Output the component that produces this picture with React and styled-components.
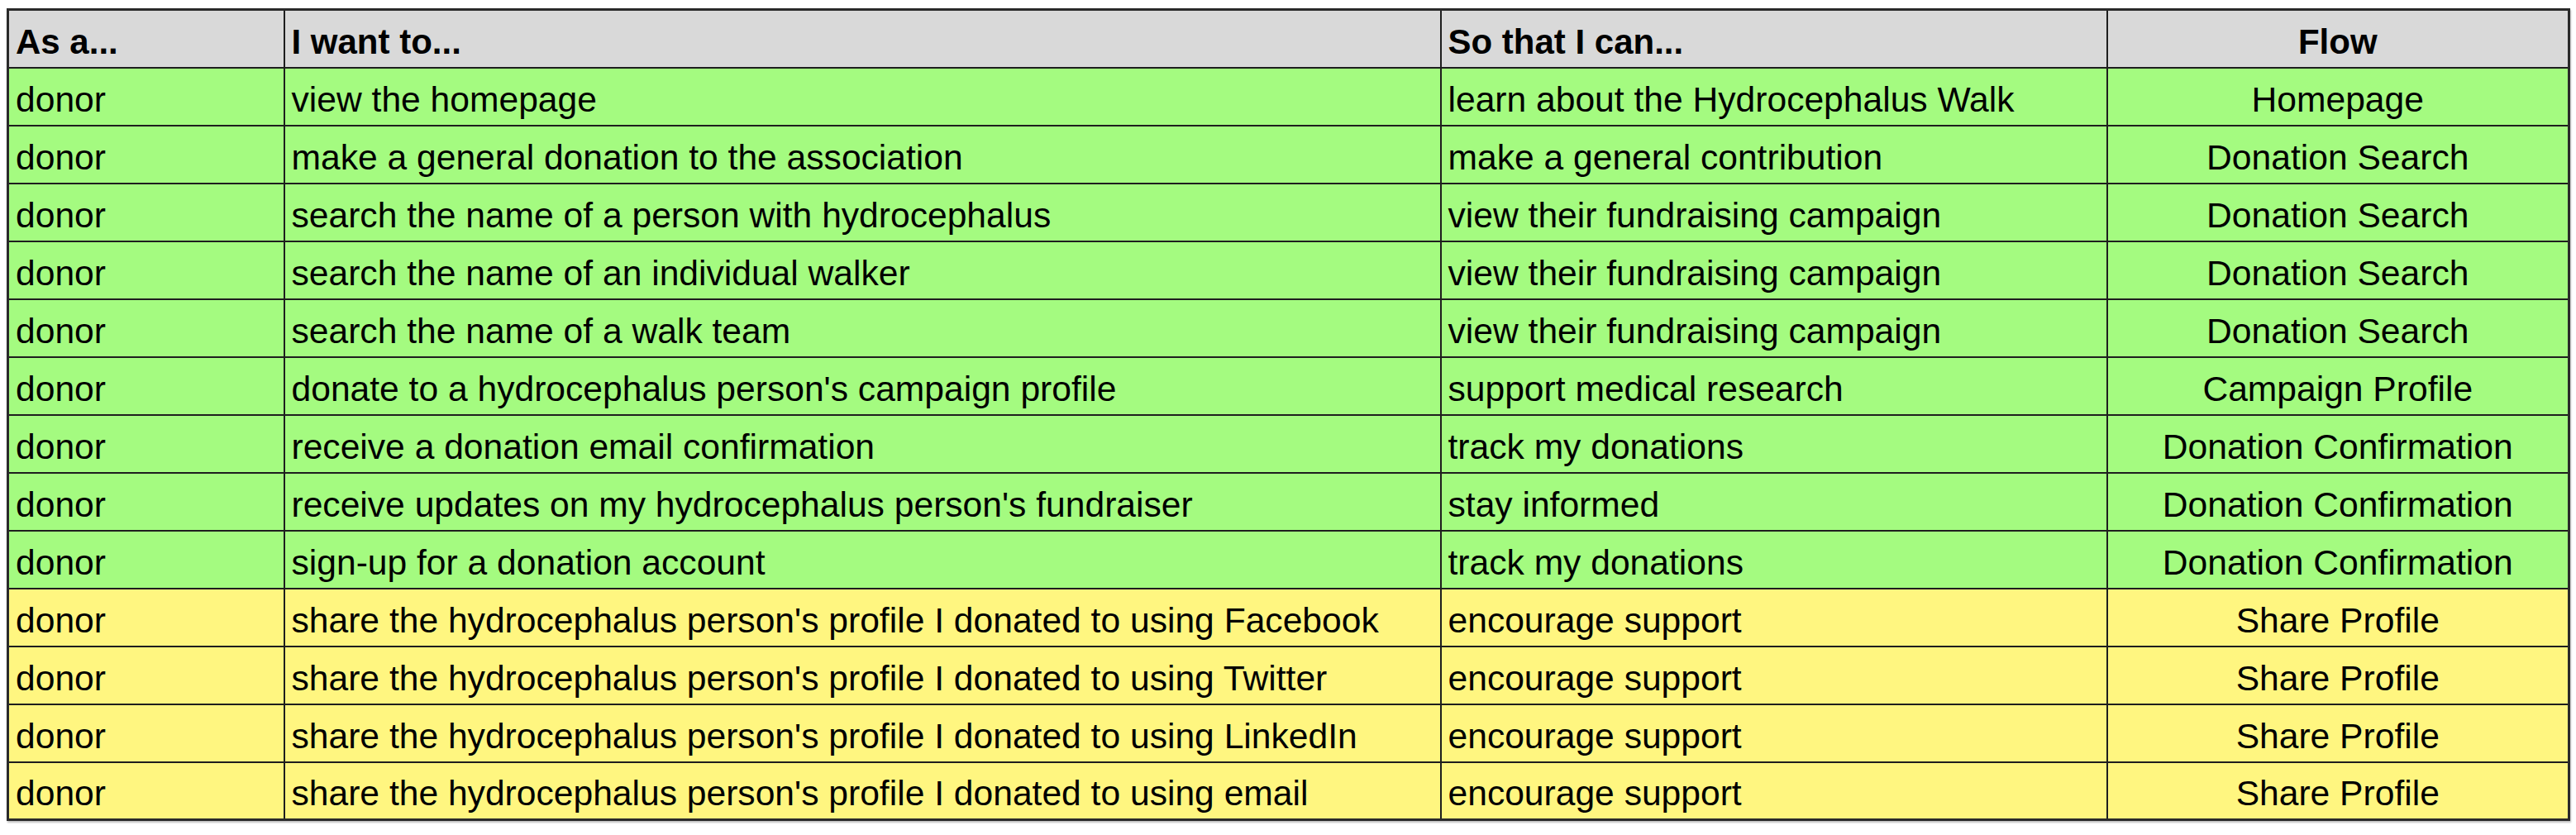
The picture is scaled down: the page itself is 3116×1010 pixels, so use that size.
import styled, { createGlobalStyle } from 'styled-components';

const GlobalStyle = createGlobalStyle`
  html, body {
    margin: 0;
    background: #ffffff;
  }
  body {
    padding: 10px 8px;
    font-family: "Liberation Sans", Arial, Helvetica, sans-serif;
    color: #000;
  }
`;

const Sheet = styled.table`
  width: 3098px;
  border-collapse: collapse;
  table-layout: fixed;
  border: 3px solid #2a2a2a;
  box-shadow: 1px 2px 2px rgba(0, 0, 0, 0.25);
`;

const Row = styled.tr`
  height: 70px;
  background: ${({ $tone }) =>
    $tone === 'head' ? '#d9d9d9' : $tone === 'yellow' ? '#fff680' : '#a4fb80'};
`;

const HeadCell = styled.th`
  font-size: 42px;
  font-weight: bold;
  text-align: ${({ $center }) => ($center ? 'center' : 'left')};
  vertical-align: bottom;
  padding: 0 8px 6px;
  border: 2px solid #1e1e1e;
  white-space: nowrap;
  overflow: hidden;
`;

const Cell = styled.td`
  font-size: 42.6px;
  font-weight: normal;
  text-align: ${({ $center }) => ($center ? 'center' : 'left')};
  vertical-align: bottom;
  padding: 0 8px 6px;
  border: 2px solid #1e1e1e;
  white-space: nowrap;
  overflow: hidden;
`;

const stories = [
  ['view the homepage', 'learn about the Hydrocephalus Walk', 'Homepage', 'green'],
  ['make a general donation to the association', 'make a general contribution', 'Donation Search', 'green'],
  ['search the name of a person with hydrocephalus', 'view their fundraising campaign', 'Donation Search', 'green'],
  ['search the name of an individual walker', 'view their fundraising campaign', 'Donation Search', 'green'],
  ['search the name of a walk team', 'view their fundraising campaign', 'Donation Search', 'green'],
  ["donate to a hydrocephalus person's campaign profile", 'support medical research', 'Campaign Profile', 'green'],
  ['receive a donation email confirmation', 'track my donations', 'Donation Confirmation', 'green'],
  ["receive updates on my hydrocephalus person's fundraiser", 'stay informed', 'Donation Confirmation', 'green'],
  ['sign-up for a donation account', 'track my donations', 'Donation Confirmation', 'green'],
  ["share the hydrocephalus person's profile I donated to using Facebook", 'encourage support', 'Share Profile', 'yellow'],
  ["share the hydrocephalus person's profile I donated to using Twitter", 'encourage support', 'Share Profile', 'yellow'],
  ["share the hydrocephalus person's profile I donated to using LinkedIn", 'encourage support', 'Share Profile', 'yellow'],
  ["share the hydrocephalus person's profile I donated to using email", 'encourage support', 'Share Profile', 'yellow'],
];

export default function App() {
  return (
    <>
      <GlobalStyle />
      <Sheet>
        <colgroup>
          <col style={{ width: 334 }} />
          <col style={{ width: 1399 }} />
          <col style={{ width: 806 }} />
          <col style={{ width: 559 }} />
        </colgroup>
        <thead>
          <Row $tone="head">
            <HeadCell>As a...</HeadCell>
            <HeadCell>I want to...</HeadCell>
            <HeadCell>So that I can...</HeadCell>
            <HeadCell $center>Flow</HeadCell>
          </Row>
        </thead>
        <tbody>
          {stories.map(([want, reason, flow, tone], i) => (
            <Row key={i} $tone={tone}>
              <Cell>donor</Cell>
              <Cell>{want}</Cell>
              <Cell>{reason}</Cell>
              <Cell $center>{flow}</Cell>
            </Row>
          ))}
        </tbody>
      </Sheet>
    </>
  );
}
